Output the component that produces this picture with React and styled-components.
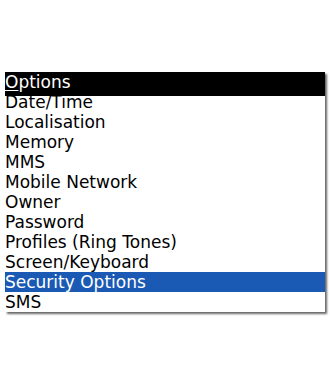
import React from 'react';
import styled, { createGlobalStyle } from 'styled-components';

const GlobalStyle = createGlobalStyle`
    html, body {
        margin: 0;
        padding: 0;
        background: #ffffff;
    }
    body {
        font-family: "DejaVu Sans", "Noto Sans", sans-serif;
    }
`;

const Screen = styled.div`
    width: 330px;
    height: 385px;
    padding-top: 72px;
    padding-left: 5px;
    box-sizing: border-box;
`;

const Menu = styled.div`
    width: 320px;
    background: #ffffff;
    box-shadow: 2px 2px 2px rgba(0, 0, 0, 0.6);
    display: flex;
    flex-direction: column;
`;

// title bar sits over the top of the first row
const Title = styled.div`
    position: relative;
    z-index: 1;
    height: 24px;
    margin-bottom: -4px;
    background: #000000;
    color: #ffffff;
    font-size: 17px;
    line-height: 20px;
    u {
        text-decoration-thickness: 1px;
        text-underline-offset: 2px;
    }
`;

const Item = styled.div`
    height: 20px;
    line-height: 20px;
    font-size: 17px;
    white-space: nowrap;
    background: ${({ selected }) => (selected ? '#1a5ab4' : 'transparent')};
    color: ${({ selected }) => (selected ? '#ffffff' : '#000000')};
`;

const items = [
    'Date/Time',
    'Localisation',
    'Memory',
    'MMS',
    'Mobile Network',
    'Owner',
    'Password',
    'Profiles (Ring Tones)',
    'Screen/Keyboard',
    'Security Options',
    'SMS',
];

export default function App() {
    return (
        <>
            <GlobalStyle />
            <Screen>
                <Menu>
                    <Title>
                        <u>O</u>ptions
                    </Title>
                    {items.map((label) => (
                        <Item key={label} selected={label === 'Security Options'}>
                            {label}
                        </Item>
                    ))}
                </Menu>
            </Screen>
        </>
    );
}
